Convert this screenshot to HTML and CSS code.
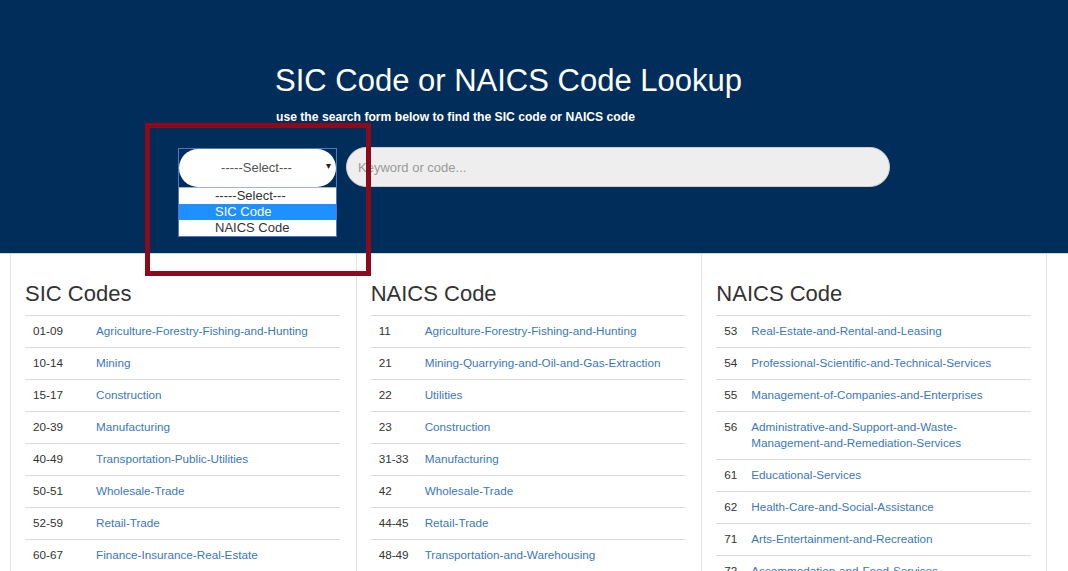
FILE: index.html
```html
<!DOCTYPE html>
<html lang="en">
<head>
<meta charset="utf-8">
<title>SIC Code or NAICS Code Lookup</title>
<link rel="stylesheet" href="styles.css">
</head>
<body>
<header class="hero">
  <div class="hero-inner">
    <h1 class="hero-title">SIC Code or NAICS Code Lookup</h1>
    <p class="hero-sub">use the search form below to find the SIC code or NAICS code</p>
  </div>
  <form class="search-row">
    <div class="select-wrap">
      <div class="select-box">
        <span class="select-value">-----Select---</span>
        <span class="select-arrow">&#9662;</span>
      </div>
      <ul class="select-list">
        <li class="opt">-----Select---</li>
        <li class="opt opt-active">SIC Code</li>
        <li class="opt">NAICS Code</li>
      </ul>
    </div>
    <input class="search-input" type="text" placeholder="Keyword or code...">
  </form>
  <div class="annotation"></div>
</header>

<main class="columns">
  <section class="col">
    <h3 class="col-title">SIC Codes</h3>
    <table class="codes codes-sic">
      <tr><td class="code">01-09</td><td><a href="#">Agriculture-Forestry-Fishing-and-Hunting</a></td></tr>
      <tr><td class="code">10-14</td><td><a href="#">Mining</a></td></tr>
      <tr><td class="code">15-17</td><td><a href="#">Construction</a></td></tr>
      <tr><td class="code">20-39</td><td><a href="#">Manufacturing</a></td></tr>
      <tr><td class="code">40-49</td><td><a href="#">Transportation-Public-Utilities</a></td></tr>
      <tr><td class="code">50-51</td><td><a href="#">Wholesale-Trade</a></td></tr>
      <tr><td class="code">52-59</td><td><a href="#">Retail-Trade</a></td></tr>
      <tr><td class="code">60-67</td><td><a href="#">Finance-Insurance-Real-Estate</a></td></tr>
      <tr><td class="code">70-89</td><td><a href="#">Services</a></td></tr>
      <tr><td class="code">91-99</td><td><a href="#">Public-Administration</a></td></tr>
    </table>
  </section>
  <section class="col">
    <h3 class="col-title">NAICS Code</h3>
    <table class="codes codes-naics">
      <tr><td class="code">11</td><td><a href="#">Agriculture-Forestry-Fishing-and-Hunting</a></td></tr>
      <tr><td class="code">21</td><td><a href="#">Mining-Quarrying-and-Oil-and-Gas-Extraction</a></td></tr>
      <tr><td class="code">22</td><td><a href="#">Utilities</a></td></tr>
      <tr><td class="code">23</td><td><a href="#">Construction</a></td></tr>
      <tr><td class="code">31-33</td><td><a href="#">Manufacturing</a></td></tr>
      <tr><td class="code">42</td><td><a href="#">Wholesale-Trade</a></td></tr>
      <tr><td class="code">44-45</td><td><a href="#">Retail-Trade</a></td></tr>
      <tr><td class="code">48-49</td><td><a href="#">Transportation-and-Warehousing</a></td></tr>
      <tr><td class="code">51</td><td><a href="#">Information</a></td></tr>
      <tr><td class="code">52</td><td><a href="#">Finance-and-Insurance</a></td></tr>
    </table>
  </section>
  <section class="col">
    <h3 class="col-title">NAICS Code</h3>
    <table class="codes codes-naics2">
      <tr><td class="code">53</td><td><a href="#">Real-Estate-and-Rental-and-Leasing</a></td></tr>
      <tr><td class="code">54</td><td><a href="#">Professional-Scientific-and-Technical-Services</a></td></tr>
      <tr><td class="code">55</td><td><a href="#">Management-of-Companies-and-Enterprises</a></td></tr>
      <tr><td class="code">56</td><td><a href="#">Administrative-and-Support-and-Waste-Management-and-Remediation-Services</a></td></tr>
      <tr><td class="code">61</td><td><a href="#">Educational-Services</a></td></tr>
      <tr><td class="code">62</td><td><a href="#">Health-Care-and-Social-Assistance</a></td></tr>
      <tr><td class="code">71</td><td><a href="#">Arts-Entertainment-and-Recreation</a></td></tr>
      <tr><td class="code">72</td><td><a href="#">Accommodation-and-Food-Services</a></td></tr>
      <tr><td class="code">81</td><td><a href="#">Other-Services</a></td></tr>
    </table>
  </section>
</main>
</body>
</html>
```

FILE: styles.css
```css
* { box-sizing: border-box; }

html, body {
  margin: 0;
  padding: 0;
  background: #ffffff;
  font-family: "Liberation Sans", Arial, Helvetica, sans-serif;
  color: #333333;
}

.hero {
  position: relative;
  height: 254px;
  background: #012d5a;
  border-bottom: 1px solid #c9d6e4;
  padding-top: 63px;
}

.hero-inner {
  width: 712px;
  margin: 0 auto;
  padding-left: 97px;
  color: #ffffff;
}

.hero-title {
  margin: 0;
  font-size: 31px;
  line-height: 36px;
  font-weight: normal;
}

.hero-sub {
  margin: 10px 0 0 1px;
  font-size: 12.15px;
  line-height: 16px;
  font-weight: bold;
}

.search-row {
  display: flex;
  justify-content: center;
  align-items: flex-start;
  gap: 9px;
  margin-top: 22px;
}

.select-wrap {
  width: 159px;
  margin-top: 1px;
  border: 1px solid #4a78c2;
}

.select-box {
  position: relative;
  height: 38px;
  background: #ffffff;
  border-radius: 19px;
  display: flex;
  align-items: center;
  justify-content: center;
  font-size: 13px;
  color: #555555;
}

.select-value {
  margin-left: -2px;
  margin-top: -2px;
}

.select-arrow {
  position: absolute;
  right: 5px;
  top: 11px;
  font-size: 10px;
  color: #222222;
}

.select-list {
  list-style: none;
  margin: 0;
  padding: 0;
  background: #ffffff;
  border-top: 1px solid #9fb5d9;
}

.opt {
  height: 16px;
  line-height: 16px;
  font-size: 13px;
  color: #333333;
  padding-left: 36px;
}

.opt-active {
  background: #1e90ff;
  color: #ffffff;
}

.search-input {
  width: 544px;
  height: 40px;
  border: 1px solid #cfcfcf;
  border-radius: 20px;
  background: #eeeeee;
  padding: 0 11px;
  font-family: "Liberation Sans", Arial, sans-serif;
  font-size: 13px;
  color: #555555;
  outline: none;
}

.search-input::placeholder {
  color: #9a9a9a;
}

.annotation {
  position: absolute;
  left: 145px;
  top: 123px;
  width: 226px;
  height: 153px;
  border: 5px solid #8b0a1c;
  z-index: 5;
}

.columns {
  display: grid;
  grid-template-columns: repeat(3, 1fr);
  width: 1037px;
  margin-left: 10px;
}

.col {
  border-left: 1px solid #e3e3e3;
  padding: 28px 16px 20px 14px;
}

.col:last-child {
  border-right: 1px solid #e3e3e3;
  padding-right: 15px;
}

.col-title {
  margin: 0 0 9px 0;
  font-size: 22px;
  line-height: 24px;
  font-weight: normal;
  color: #333333;
}

.codes {
  width: 100%;
  border-collapse: collapse;
  font-size: 11.7px;
  line-height: 16px;
}

.codes td {
  border-top: 1px solid #dddddd;
  padding: 7px 8px 8px 0;
  vertical-align: top;
}

.codes td.code {
  padding-left: 8px;
  padding-right: 0;
  color: #333333;
  white-space: nowrap;
}

.codes-sic td.code { width: 71px; }
.codes-naics td.code { width: 54px; }
.codes-naics2 td.code { width: 35px; }

.codes a {
  color: #3a78bd;
  text-decoration: none;
}
```
